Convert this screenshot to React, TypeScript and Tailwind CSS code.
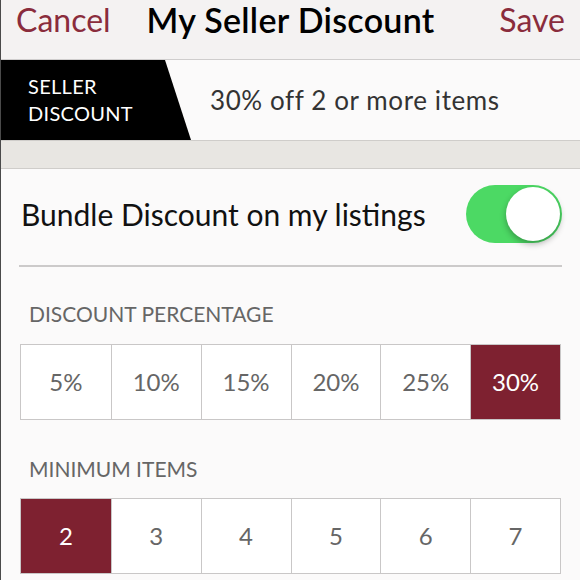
import React from "react";

const percents = ["5%", "10%", "15%", "20%", "25%", "30%"];
const minimums = ["2", "3", "4", "5", "6", "7"];

function Segments({ items, selected }: { items: string[]; selected: string }) {
  return (
    <div className="mx-[19px] grid grid-cols-6 border border-[#c9c7c7] bg-white">
      {items.map((v, i) => (
        <div
          key={v}
          className={
            "flex h-[74px] items-center justify-center text-[24px] " +
            (i > 0 ? "border-l border-[#c9c7c7] " : "") +
            (v === selected ? "bg-[#7e2130] text-white" : "text-[#666]")
          }
        >
          {v}
        </div>
      ))}
    </div>
  );
}

export default function App() {
  return (
    <div
      className="h-[580px] w-[580px] overflow-hidden border-l border-[#4a4a4a] bg-[#fbfafa] text-[#111]"
      style={{ fontFamily: "Lato, 'Open Sans', sans-serif" }}
    >
      {/* navigation bar */}
      <div className="grid h-[60px] grid-cols-[1fr_auto_1fr] items-start border-b border-[#cfcdcd] bg-[#f4f2f2] px-[15px] pt-[1px]">
        <span className="justify-self-start text-[32px] leading-[38px] text-[#8a2c3c]">Cancel</span>
        <span className="text-[34px] font-semibold leading-[38px] tracking-[0.3px] text-black">My Seller Discount</span>
        <span className="justify-self-end text-[32px] leading-[38px] text-[#8a2c3c]">Save</span>
      </div>

      {/* current discount banner */}
      <div className="flex h-[80px] items-center bg-[#fbfafa]">
        <div className="flex h-full w-[190px] flex-col justify-center bg-black pl-[27px] text-[20px] leading-[27px] tracking-[0.3px] text-white [clip-path:polygon(0_0,164px_0,190px_100%,0_100%)]">
          <span>SELLER</span>
          <span>DISCOUNT</span>
        </div>
        <span className="ml-[19px] text-[26px] tracking-[0.6px] text-[#333]">30% off 2 or more items</span>
      </div>

      {/* spacer band */}
      <div className="h-[29px] border-y border-[#cfcdca] bg-[#e8e6e2]" />

      {/* toggle row */}
      <div className="flex h-[96px] items-center justify-between pb-[6px] pl-[20px] pr-[18px]">
        <span className="text-[30px] text-[#111]">Bundle Discount on my listings</span>
        <div className="flex h-[58px] w-[96px] items-center justify-end rounded-full bg-[#4cd964] pr-[2px]">
          <div className="h-[54px] w-[54px] rounded-full bg-white shadow-[0_3px_6px_rgba(0,0,0,0.3)]" />
        </div>
      </div>
      <div className="mx-[18px] h-[2px] bg-[#cccaca]" />

      <div className="mt-[36px] pl-[28px] text-[21px] leading-[22px] text-[#666]">DISCOUNT PERCENTAGE</div>
      <div className="mt-[19px]">
        <Segments items={percents} selected="30%" />
      </div>

      <div className="mt-[38px] pl-[28px] text-[21px] leading-[22px] text-[#666]">MINIMUM ITEMS</div>
      <div className="mt-[18px]">
        <Segments items={minimums} selected="2" />
      </div>
    </div>
  );
}
